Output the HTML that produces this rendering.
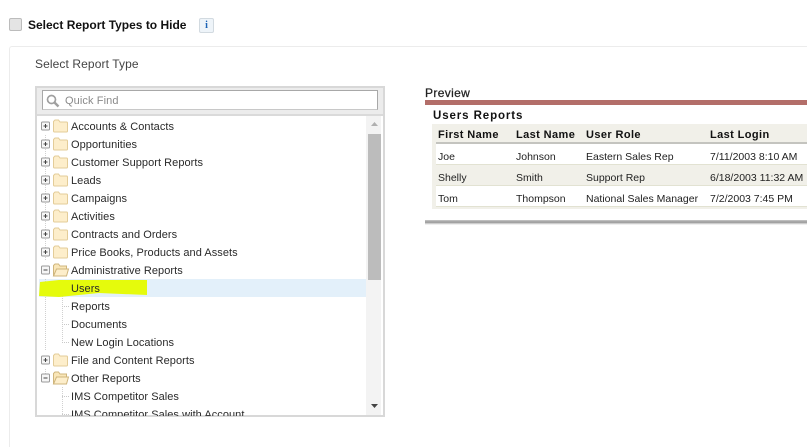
<!DOCTYPE html>
<html><head><meta charset="utf-8"><style>
html,body{margin:0;padding:0;background:#fff}
body{width:807px;height:446px;position:relative;overflow:hidden;font-family:"Liberation Sans",Arial,sans-serif;color:#222}
.a{position:absolute}
.t{position:absolute;white-space:nowrap;font-size:11px;line-height:14px}
.row{position:absolute;left:71px;font-size:11px;line-height:14px;white-space:nowrap;color:#2a2a2a;letter-spacing:.05px}
svg{position:absolute;overflow:visible}
.th{position:absolute;font-size:11px;font-weight:bold;line-height:14px;white-space:nowrap;color:#111;letter-spacing:.4px}
.td{position:absolute;font-size:10.5px;line-height:14px;white-space:nowrap;color:#222}
</style></head><body>
<div class="a" style="left:9px;top:18px;width:11px;height:11px;background:#e4e4e4;border:1px solid #bcbcbc;border-radius:2px"></div>
<div class="t" style="left:28px;top:18px;font-size:12px;font-weight:bold;color:#111;letter-spacing:0">Select Report Types to Hide</div>
<div class="a" style="left:199px;top:18px;width:13px;height:13px;background:#eef4f9;border:1px solid #d2dae0;border-radius:2px;font:bold 10px/14px 'Liberation Serif',serif;color:#1b62b5;text-align:center">i</div>
<div class="a" style="left:9px;top:46px;width:798px;height:400px;border-left:1px solid #ececec;border-top:1px solid #ececec;border-radius:3px 0 0 0"></div>
<div class="t" style="left:35px;top:57px;font-size:12px;color:#444;letter-spacing:.1px">Select Report Type</div>

<div class="a" style="left:35px;top:86px;width:346px;height:327px;background:#fff;border:2px solid #d8d8d8"></div>
<div class="a" style="left:37px;top:88px;width:346px;height:26px;background:#ececec;border-bottom:2px solid #dadada"></div>
<div class="a" style="left:42px;top:90px;width:334px;height:18px;background:#fff;border:1px solid #a8a8a8;border-bottom-color:#c8c8c8"></div>
<svg style="left:46px;top:94px" width="14" height="14" viewBox="0 0 14 14"><circle cx="5.500" cy="5.500" r="4" fill="none" stroke="#a0a0a0" stroke-width="1.700"/><path d="M8.500 8.500L12.500 12.500" stroke="#a0a0a0" stroke-width="2.400"/></svg>
<div class="t" style="left:65px;top:94px;color:#8a8a8a;letter-spacing:.1px">Quick Find</div>

<div class="a" style="left:39px;top:279px;width:327px;height:18px;background:#e3f0fa"></div>

<svg style="left:0;top:0" width="807" height="446">
<path d="M45.500 135V261M62.500 280V342M45.500 279V351M45.500 369V378M62.500 387V414" stroke="#d0d0d0" stroke-dasharray="1 1" fill="none"/>
<path d="M62 288.500H70M62 306.500H70M62 324.500H70M62 342.500H70M62 396.500H70M62 414.500H70" stroke="#c8c8c8" stroke-dasharray="1 1" fill="none"/>
<defs>
<g id="p"><rect x="41.500" y="-4.500" width="8" height="8" fill="#f6f6f6" stroke="#9a9a9a" rx="1"/><path d="M43.500-.5H47.500M45.500-2.500V1.500" stroke="#444"/></g>
<g id="m"><rect x="41.500" y="-4.500" width="8" height="8" fill="#f6f6f6" stroke="#9a9a9a" rx="1"/><path d="M43.500-.5H47.500" stroke="#444"/></g>
<g id="f"><path d="M53.500-3.500V4.500Q53.500 5.500 54.500 5.500H66.500Q67.500 5.500 67.500 4.500V-3.500Q67.500-4.500 66.500-4.500H60L58.500-6.500H55L53.500-5Z" fill="#fdeecb" stroke="#e3cc98"/></g>
<g id="o"><path d="M53.500-5L55-6.500H58.500L60-4.500H66.500V-1.500H57L53.500 5.500Z" fill="#f9e6b8" stroke="#cfb57c"/><path d="M53.500 5.500L56.500-1.500H68.500L66.500 5.500Z" fill="#fdeecb" stroke="#cfb57c"/></g>
</defs>
<use href="#p" y="126.500"/><use href="#f" y="126.500"/>
<use href="#p" y="144.500"/><use href="#f" y="144.500"/>
<use href="#p" y="162.500"/><use href="#f" y="162.500"/>
<use href="#p" y="180.500"/><use href="#f" y="180.500"/>
<use href="#p" y="198.500"/><use href="#f" y="198.500"/>
<use href="#p" y="216.500"/><use href="#f" y="216.500"/>
<use href="#p" y="234.500"/><use href="#f" y="234.500"/>
<use href="#p" y="252.500"/><use href="#f" y="252.500"/>
<use href="#m" y="270.500"/><use href="#o" y="270.500"/>
<use href="#p" y="360.500"/><use href="#f" y="360.500"/>
<use href="#m" y="378.500"/><use href="#o" y="378.500"/>
</svg>
<svg style="left:39px;top:279px" width="110" height="19" viewBox="0 0 110 19"><path d="M1 3L20 1L108 1L108 16L60 14L20 18L0 17Z" fill="#e5fb0c"/></svg>

<div class="row" style="top:120px">Accounts &amp; Contacts</div>
<div class="row" style="top:138px">Opportunities</div>
<div class="row" style="top:156px">Customer Support Reports</div>
<div class="row" style="top:174px">Leads</div>
<div class="row" style="top:192px">Campaigns</div>
<div class="row" style="top:210px">Activities</div>
<div class="row" style="top:228px">Contracts and Orders</div>
<div class="row" style="top:246px">Price Books, Products and Assets</div>
<div class="row" style="top:264px">Administrative Reports</div>
<div class="row" style="top:282px">Users</div>
<div class="row" style="top:300px">Reports</div>
<div class="row" style="top:318px">Documents</div>
<div class="row" style="top:336px">New Login Locations</div>
<div class="row" style="top:354px">File and Content Reports</div>
<div class="row" style="top:372px">Other Reports</div>
<div class="row" style="top:390px">IMS Competitor Sales</div>
<div class="a" style="left:37px;top:408px;width:329px;height:8px;overflow:hidden"><div class="row" style="left:34px;top:0">IMS Competitor Sales with Account</div></div>

<div class="a" style="left:366px;top:116px;width:15px;height:299px;background:#f3f3f3"></div>
<div class="a" style="left:368px;top:134px;width:13px;height:146px;background:#bcbcbc"></div>
<svg style="left:371px;top:122px" width="8" height="5"><path d="M0 4L3.500 0L7 4Z" fill="#b0b0b0"/></svg>
<svg style="left:371px;top:404px" width="8" height="5"><path d="M0 0H7L3.500 4Z" fill="#444"/></svg>

<div class="t" style="left:425px;top:86px;font-size:12px;color:#222;letter-spacing:.35px;-webkit-text-stroke:.25px #222">Preview</div>
<div class="a" style="left:425px;top:100px;width:382px;height:5px;background:#b36e69"></div>
<div class="t" style="left:433px;top:109px;font-size:11.500px;font-weight:bold;color:#111;letter-spacing:.9px">Users Reports</div>
<div class="a" style="left:432px;top:124px;width:375px;height:85px;background:#f1f0e9"></div>
<div class="a" style="left:436px;top:142px;width:371px;height:2px;background:#c4c4bf"></div>
<div class="a" style="left:436px;top:144px;width:371px;height:20px;background:#fff"></div>
<div class="a" style="left:436px;top:164px;width:371px;height:1px;background:#e2e2d2"></div>
<div class="a" style="left:436px;top:185px;width:371px;height:1px;background:#e2e2d2"></div>
<div class="a" style="left:436px;top:186px;width:371px;height:20px;background:#fff"></div>
<div class="a" style="left:436px;top:206px;width:371px;height:1px;background:#e2e2d2"></div>
<div class="a" style="left:425px;top:220px;width:382px;height:5px;background:linear-gradient(#c8c8c8,#989898 45%,#d8d8d8 75%,#fff)"></div>

<div class="th" style="left:438px;top:128px">First Name</div>
<div class="th" style="left:516px;top:128px">Last Name</div>
<div class="th" style="left:586px;top:128px">User Role</div>
<div class="th" style="left:710px;top:128px">Last Login</div>
<div class="td" style="left:438px;top:150px">Joe</div>
<div class="td" style="left:516px;top:150px">Johnson</div>
<div class="td" style="left:586px;top:150px">Eastern Sales Rep</div>
<div class="td" style="left:710px;top:150px">7/11/2003 8:10 AM</div>
<div class="td" style="left:438px;top:171px">Shelly</div>
<div class="td" style="left:516px;top:171px">Smith</div>
<div class="td" style="left:586px;top:171px">Support Rep</div>
<div class="td" style="left:710px;top:171px">6/18/2003 11:32 AM</div>
<div class="td" style="left:438px;top:192px">Tom</div>
<div class="td" style="left:516px;top:192px">Thompson</div>
<div class="td" style="left:586px;top:192px">National Sales Manager</div>
<div class="td" style="left:710px;top:192px">7/2/2003 7:45 PM</div>
</body></html>
